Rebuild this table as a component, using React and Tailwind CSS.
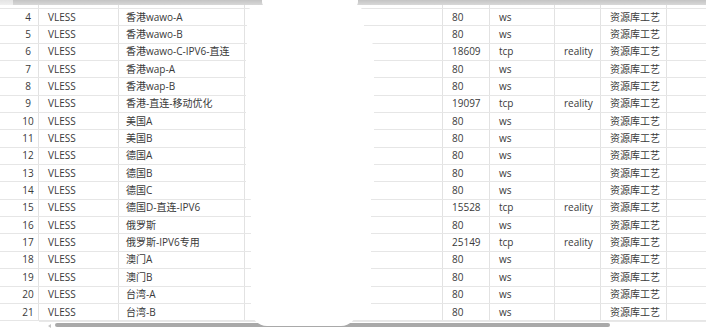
import React from "react";

const rows = [
  [4, "香港wawo-A", "80", "ws", ""],
  [5, "香港wawo-B", "80", "ws", ""],
  [6, "香港wawo-C-IPV6-直连", "18609", "tcp", "reality"],
  [7, "香港wap-A", "80", "ws", ""],
  [8, "香港wap-B", "80", "ws", ""],
  [9, "香港-直连-移动优化", "19097", "tcp", "reality"],
  [10, "美国A", "80", "ws", ""],
  [11, "美国B", "80", "ws", ""],
  [12, "德国A", "80", "ws", ""],
  [13, "德国B", "80", "ws", ""],
  [14, "德国C", "80", "ws", ""],
  [15, "德国D-直连-IPV6", "15528", "tcp", "reality"],
  [16, "俄罗斯", "80", "ws", ""],
  [17, "俄罗斯-IPV6专用", "25149", "tcp", "reality"],
  [18, "澳门A", "80", "ws", ""],
  [19, "澳门B", "80", "ws", ""],
  [20, "台湾-A", "80", "ws", ""],
  [21, "台湾-B", "80", "ws", ""],
];

function Row({ r }) {
  const [n, name, port, net, sec] = r;
  return (
    <div className="flex h-[17.35px] border-b border-[#e6e6e6] items-center">
      <div className="w-[39px] h-full border-r border-[#e2e2e2] pl-[18px] flex items-center justify-center">{n}</div>
      <div className="w-[80px] h-full border-r border-[#e2e2e2] pl-[9px] flex items-center">VLESS</div>
      <div className="w-[126px] h-full border-r border-[#e2e2e2] pl-[7px] flex items-center whitespace-nowrap">{name}</div>
      <div className="w-[198px] h-full border-r border-[#e2e2e2]"></div>
      <div className="w-[47px] h-full border-r border-[#e2e2e2] pl-[9px] flex items-center">{port}</div>
      <div className="w-[65px] h-full border-r border-[#e2e2e2] pl-[9px] flex items-center">{net}</div>
      <div className="w-[46px] h-full border-r border-[#e2e2e2] pl-[9px] flex items-center">{sec}</div>
      <div className="w-[66px] h-full border-r border-[#e2e2e2] pl-[9px] flex items-center whitespace-nowrap">资源库工艺</div>
      <div className="flex-1 h-full"></div>
    </div>
  );
}

export default function App() {
  return (
    <div
      className="relative w-[706px] h-[329px] bg-white overflow-hidden text-[10px] text-[#3a3a3a]"
      style={{ fontFamily: '"Open Sans", "Noto Sans CJK SC", sans-serif' }}
    >
      <div className="flex h-[5px]">
        <div className="w-[13px] h-full bg-gradient-to-b from-[#e4e4e4] to-[#f0f0f0]"></div>
        <div className="flex-1 h-full bg-gradient-to-b from-[#c4c4c4] to-[#d8d8d8]"></div>
      </div>
      <div className="flex h-[3px] border-b border-[#e6e6e6] box-content">
        <div className="w-[39px] h-full border-r border-[#e2e2e2]"></div>
        <div className="w-[80px] h-full border-r border-[#e2e2e2]"></div>
        <div className="w-[126px] h-full border-r border-[#e2e2e2]"></div>
        <div className="w-[198px] h-full border-r border-[#e2e2e2]"></div>
        <div className="w-[47px] h-full border-r border-[#e2e2e2]"></div>
        <div className="w-[65px] h-full border-r border-[#e2e2e2]"></div>
        <div className="w-[46px] h-full border-r border-[#e2e2e2]"></div>
        <div className="w-[66px] h-full border-r border-[#e2e2e2]"></div>
      </div>
      {rows.map((r) => (
        <Row key={r[0]} r={r} />
      ))}
      <div className="flex h-[6px]">
        <div className="w-[39px]"></div>
        <div className="relative flex-1 h-full border-t border-[#e8e8e8]">
          <div className="absolute left-[9px] top-[2px] w-0 h-0 border-y-[2px] border-y-transparent border-r-[3px] border-r-[#c4c4c4]"></div>
          <div className="absolute left-[16px] top-[1px] w-[555px] h-[4px] rounded-full bg-[#a9a9a9]"></div>
        </div>
      </div>
      {/* redaction blob */}
      <div className="absolute left-[262px] top-0 w-[96px] h-[8px] bg-white rounded-b-[6px]"></div>
      <div className="absolute left-[247px] top-[5px] w-[117px] h-[60px] bg-white rounded-t-[10px]"></div>
      <div className="absolute left-[246px] top-[40px] w-[128px] h-[160px] bg-white rounded-[8px]"></div>
      <div className="absolute left-[251px] top-[180px] w-[120px] h-[134px] bg-white rounded-br-[10px]"></div>
      <div className="absolute left-[251px] top-[300px] w-[106px] h-[26px] bg-white rounded-b-[16px]"></div>
    </div>
  );
}
